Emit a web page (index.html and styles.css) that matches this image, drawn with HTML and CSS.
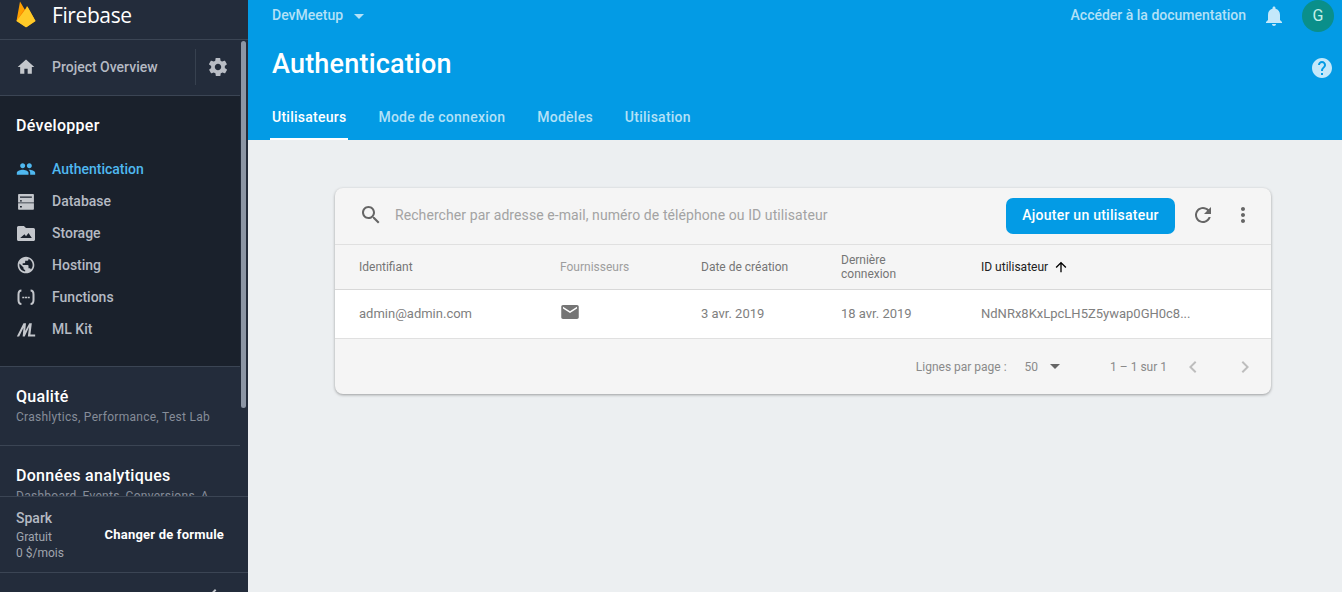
FILE: index.html
```html
<!DOCTYPE html>
<html lang="fr">

<head>
    <meta charset="UTF-8">
    <title>Authentication - Firebase</title>
    <link rel="stylesheet" href="styles.css">
</head>

<body>
    <aside class="sidebar">
        <div class="brand">
            <svg class="brand-logo" viewBox="0 0 20 27" width="20" height="27">
                <path fill="#ffa000" d="M.5 20 4 .5l5 8.500 2-4 8.500 15-9 6z"/>
                <path fill="#f57c00" d="M.5 20 8 8.500l3.500 6z"/>
                <path fill="#ffca28" d="M.5 20 11.500 5.500 19.500 20l-8.700 6c-.5.300-1 .3-1.500 0z"/>
            </svg>
            <span class="brand-name">Firebase</span>
        </div>

        <div class="sidebar-scroll">
            <div class="overview">
                <svg class="nav-icon" viewBox="0 0 24 24"><path d="M10 20v-6h4v6h5v-8h3L12 3 2 12h3v8z"/></svg>
                <span class="overview-label">Project Overview</span>
                <span class="overview-gear">
                    <svg viewBox="0 0 24 24" width="22" height="22"><path d="M19.400 13c.04-.3.100-.7.100-1s-.03-.7-.1-1l2.100-1.600c.2-.2.2-.4.100-.6l-2-3.500c-.1-.2-.4-.3-.6-.2l-2.500 1c-.5-.4-1.100-.7-1.700-1l-.4-2.600c0-.3-.2-.4-.5-.4h-4c-.3 0-.5.200-.5.400l-.4 2.600c-.6.300-1.200.6-1.700 1l-2.500-1c-.2-.1-.5 0-.6.200l-2 3.500c-.1.200-.1.500.1.600L4.600 11c0 .3-.1.700-.1 1s0 .7.100 1l-2.100 1.600c-.2.200-.2.400-.1.600l2 3.500c.1.200.4.300.6.200l2.500-1c.5.400 1.100.7 1.700 1l.4 2.600c0 .3.200.4.500.4h4c.3 0 .5-.2.500-.4l.4-2.600c.6-.3 1.200-.6 1.700-1l2.500 1c.2.100.5 0 .6-.2l2-3.500c.1-.2.100-.5-.1-.6zM12 15.500c-1.900 0-3.500-1.600-3.500-3.500s1.600-3.500 3.500-3.500 3.500 1.600 3.500 3.500-1.600 3.500-3.500 3.500z"/></svg>
                </span>
            </div>

            <nav class="nav-develop">
                <h2 class="nav-title">Développer</h2>
                <a class="nav-item is-active">
                    <svg class="nav-icon" viewBox="0 0 24 24"><path d="M16 11c1.700 0 3-1.300 3-3s-1.300-3-3-3-3 1.300-3 3 1.300 3 3 3zm-8 0c1.700 0 3-1.300 3-3S9.700 5 8 5 5 6.300 5 8s1.300 3 3 3zm0 2c-2.300 0-7 1.200-7 3.500V19h14v-2.500C15 14.200 10.300 13 8 13zm8 0h-1c1.200.8 2 2 2 3.500V19h6v-2.500c0-2.300-4.700-3.500-7-3.500z"/></svg>
                    Authentication
                </a>
                <a class="nav-item">
                    <svg class="nav-icon" viewBox="0 0 24 24"><path fill-rule="evenodd" d="M3.500 3.600h17c.6 0 1 .4 1 1v9.200H2.500V4.600c0-.6.400-1 1-1zM4.800 6.500V8H19V6.500zm0 4.500v1.500H7V11zM2.500 14.800h19v6.700c0 .6-.4 1-1 1h-17c-.6 0-1-.4-1-1zM4.800 18v1.800H7V18z"/></svg>
                    Database
                </a>
                <a class="nav-item">
                    <svg class="nav-icon" viewBox="0 0 24 24"><path fill-rule="evenodd" d="M1.200 5.500c0-1 .8-1.900 1.800-1.900h6.500l2.500 2.500h9c1 0 1.800.9 1.800 1.900v11.700c0 1-.8 1.900-1.800 1.900H3c-1 0-1.800-.9-1.800-1.900zM5 18h14l-4-6-3 3.800-1.800-2.300z"/></svg>
                    Storage
                </a>
                <a class="nav-item">
                    <svg class="nav-icon" viewBox="0 0 24 24"><path d="M12 2C6.500 2 2 6.500 2 12s4.500 10 10 10 10-4.500 10-10S17.500 2 12 2zm-1 17.900c-3.900-.5-7-3.900-7-7.900 0-.6.100-1.200.2-1.800L9 15v1c0 1.100.9 2 2 2zm6.900-2.500c-.3-.8-1-1.400-1.900-1.400h-1v-3c0-.6-.4-1-1-1H8v-2h2c.6 0 1-.4 1-1V7h2c1.100 0 2-.9 2-2v-.4c2.900 1.200 5 4.100 5 7.400 0 2.100-.8 4-2.100 5.400z"/></svg>
                    Hosting
                </a>
                <a class="nav-item">
                    <svg class="nav-icon nav-icon-line" viewBox="0 0 24 24">
                        <path d="M6.500 4.200C3.500 4.200 3 6.500 3 9v6.500c0 2.500.5 4.800 3.500 4.800"/>
                        <path d="M17.500 4.200c3 0 3.500 2.300 3.500 4.800v6.500c0 2.500-.5 4.800-3.500 4.800"/>
                        <path class="dash" d="M7.500 12.500h9"/>
                    </svg>
                    Functions
                </a>
                <a class="nav-item">
                    <svg class="nav-icon" viewBox="0 0 24 24"><path d="M1 21 9 5h3l-1 9.500L16 5h3l-1.700 13.500H23V21h-8.800l1.500-11.500L10.500 21H8l1-10.500L3.800 21z"/></svg>
                    ML Kit
                </a>
            </nav>

            <section class="nav-group">
                <h2 class="nav-title">Qualité</h2>
                <p class="nav-sub">Crashlytics, Performance, Test Lab</p>
            </section>

            <section class="nav-group nav-group-last">
                <h2 class="nav-title">Données analytiques</h2>
                <p class="nav-sub">Dashboard, Events, Conversions, A</p>
            </section>
        </div>

        <div class="plan">
            <div class="plan-info">
                <strong class="plan-name">Spark</strong>
                <span>Gratuit</span>
                <span>0 $/mois</span>
            </div>
            <a class="plan-change">Changer de formule</a>
        </div>
        <div class="collapse">
            <svg viewBox="0 0 24 24" width="24" height="24"><path d="M15.400 7.400 14 6l-6 6 6 6 1.400-1.400L10.800 12z"/></svg>
        </div>

        <div class="scroll-thumb"></div>
    </aside>

    <main class="content">
        <header class="topbar">
            <div class="topbar-row">
                <span class="project">DevMeetup</span>
                <span class="caret caret-light"></span>
                <a class="docs-link">Accéder à la documentation</a>
                <svg class="bell" viewBox="0 0 24 24" width="24" height="24"><path d="M12 22c1.100 0 2-.9 2-2h-4c0 1.100.9 2 2 2zm6-6v-5c0-3.100-1.600-5.600-4.500-6.300V4c0-.8-.7-1.500-1.500-1.500s-1.500.7-1.500 1.500v.7C7.600 5.400 6 7.900 6 11v5l-2 2v1h16v-1z"/></svg>
                <span class="avatar">G</span>
            </div>
            <div class="title-row">
                <h1>Authentication</h1>
                <svg class="help" viewBox="0 0 24 24" width="24" height="24"><path d="M12 2C6.500 2 2 6.500 2 12s4.500 10 10 10 10-4.500 10-10S17.500 2 12 2zm1 17h-2v-2h2zm2.100-7.700-.9.900c-.7.700-1.200 1.300-1.200 2.800h-2v-.5c0-1.100.4-2.100 1.200-2.800l1.200-1.300c.4-.3.600-.8.600-1.400 0-1.100-.9-2-2-2s-2 .9-2 2H8c0-2.200 1.800-4 4-4s4 1.800 4 4c0 .9-.4 1.700-.9 2.300z"/></svg>
            </div>
            <div class="tabs">
                <a class="tab is-active">Utilisateurs</a>
                <a class="tab">Mode de connexion</a>
                <a class="tab">Modèles</a>
                <a class="tab">Utilisation</a>
            </div>
        </header>

        <div class="page">
            <div class="card">
                <div class="toolbar">
                    <svg class="search-icon" viewBox="0 0 24 24" width="24" height="24"><path d="M15.500 14h-.8l-.3-.3c1-1.100 1.600-2.600 1.600-4.200C16 5.900 13.100 3 9.500 3S3 5.900 3 9.500 5.900 16 9.500 16c1.600 0 3.100-.6 4.200-1.600l.3.3v.8l5 5 1.500-1.500zm-6 0C7 14 5 12 5 9.500S7 5 9.500 5 14 7 14 9.500 12 14 9.500 14z"/></svg>
                    <span class="search-text">Rechercher par adresse e-mail, numéro de téléphone ou ID utilisateur</span>
                    <button class="add-btn">Ajouter un utilisateur</button>
                    <svg class="tool-icon" viewBox="0 0 24 24" width="24" height="24"><path d="M17.650 6.350C16.200 4.900 14.200 4 12 4c-4.400 0-8 3.600-8 8s3.600 8 8 8c3.700 0 6.800-2.500 7.700-6h-2.100c-.8 2.300-3 4-5.600 4-3.300 0-6-2.700-6-6s2.700-6 6-6c1.700 0 3.100.7 4.200 1.800L13 11h7V4z"/></svg>
                    <svg class="tool-icon" viewBox="0 0 24 24" width="24" height="24"><path d="M12 8c1.100 0 2-.9 2-2s-.9-2-2-2-2 .9-2 2 .9 2 2 2zm0 2c-1.100 0-2 .9-2 2s.9 2 2 2 2-.9 2-2-.9-2-2-2zm0 6c-1.100 0-2 .9-2 2s.9 2 2 2 2-.9 2-2-.9-2-2-2z"/></svg>
                </div>

                <div class="table-row table-head">
                    <span class="col-id">Identifiant</span>
                    <span class="col-prov is-muted">Fournisseurs</span>
                    <span class="col-date">Date de création</span>
                    <span class="col-last">Dernière<br>connexion</span>
                    <span class="col-uid is-sorted">ID utilisateur
                        <svg viewBox="0 0 24 24" width="16" height="16"><path d="M4 12l1.400 1.400L11 7.800V20h2V7.800l5.600 5.600L20 12l-8-8z"/></svg>
                    </span>
                </div>

                <div class="table-row table-body">
                    <span class="col-id">admin@admin.com</span>
                    <span class="col-prov">
                        <svg class="mail" viewBox="0 0 20 16" width="18" height="14"><path d="M18 0H2C.9 0 0 .9 0 2v12c0 1.100.9 2 2 2h16c1.100 0 2-.9 2-2V2c0-1.100-.9-2-2-2zm0 4-8 5-8-5V2l8 5 8-5z"/></svg>
                    </span>
                    <span class="col-date">3 avr. 2019</span>
                    <span class="col-last">18 avr. 2019</span>
                    <span class="col-uid">NdNRx8KxLpcLH5Z5ywap0GH0c8...</span>
                </div>

                <div class="pager">
                    <span>Lignes par page :</span>
                    <span class="pager-size">50</span>
                    <span class="caret caret-dark"></span>
                    <span class="pager-range">1 – 1 sur 1</span>
                    <svg class="pager-arrow" viewBox="0 0 24 24" width="24" height="24"><path d="M15.400 7.400 14 6l-6 6 6 6 1.400-1.400L10.800 12z"/></svg>
                    <svg class="pager-arrow" viewBox="0 0 24 24" width="24" height="24"><path d="M10 6 8.600 7.400 13.200 12l-4.600 4.600L10 18l6-6z"/></svg>
                </div>
            </div>
        </div>
    </main>
</body>

</html>
```

FILE: styles.css
```css
* {
    box-sizing: border-box;
}

body {
    display: flex;
    height: 592px;
    margin: 0;
    overflow: hidden;
    font-family: Roboto, sans-serif;
    background-color: #eceff1;
}

h1,
h2,
p {
    margin: 0;
    font-weight: 500;
}

/* sidebar */
.sidebar {
    position: relative;
    display: flex;
    flex: none;
    flex-direction: column;
    width: 248px;
    height: 592px;
    overflow: hidden;
    color: #fff;
    background-color: #232c3b;
}

.brand {
    display: flex;
    flex: none;
    align-items: center;
    height: 40px;
    padding: 0 0 11px 16px;
    border-bottom: 1px solid #3b4554;
}

.brand-logo {
    margin-top: 1px;
}

.brand-name {
    margin-top: 2px;
    margin-left: 16px;
    font-family: "Open Sans", Roboto, sans-serif;
    font-size: 21px;
    letter-spacing: -.4px;
}

.sidebar-scroll {
    flex: 1;
    min-height: 0;
    width: 240px;
    overflow: hidden;
}

.overview {
    display: flex;
    align-items: center;
    height: 56px;
    padding-left: 16px;
    padding-bottom: 1px;
    font-size: 14px;
    font-weight: 500;
    color: #b5bac3;
    border-bottom: 1px solid #3b4554;
}

.overview-label {
    width: 143px;
    margin-left: 16px;
}

.overview-gear {
    display: flex;
    align-items: center;
    height: 36px;
    padding-left: 11px;
    border-left: 1px solid #37414f;
}

.overview-gear svg {
    fill: #b9bdc5;
}

.nav-icon {
    flex: none;
    width: 20px;
    height: 20px;
    fill: #c4c7cc;
}

.nav-icon-line {
    fill: none;
    stroke: #c4c7cc;
    stroke-width: 2.4;
}

.nav-icon-line .dash {
    stroke-width: 1.8;
    stroke-dasharray: 2.500 .8;
}

.nav-develop {
    display: flex;
    flex-direction: column;
    height: 271px;
    padding-top: 20px;
    background-color: #1a212c;
    border-bottom: 1px solid #3b4554;
}

.nav-title {
    padding-left: 16px;
    font-size: 16px;
    line-height: 20px;
    letter-spacing: .3px;
    color: #fff;
}

.nav-develop .nav-title {
    margin-bottom: 17px;
}

.nav-item {
    display: flex;
    align-items: center;
    gap: 16px;
    height: 32px;
    padding-left: 16px;
    font-size: 14px;
    font-weight: 500;
    color: #b5bac3;
}

.nav-item.is-active {
    color: #4fb8f0;
}

.nav-item.is-active .nav-icon {
    fill: #4fb8f0;
}

.nav-group {
    height: 79px;
    padding-top: 20px;
    border-bottom: 1px solid #3b4554;
}

.nav-group-last {
    border-bottom: none;
}

.nav-sub {
    padding-left: 16px;
    font-size: 12px;
    font-weight: 400;
    line-height: 20px;
    letter-spacing: .28px;
    color: #868d99;
    white-space: nowrap;
}

.plan {
    display: flex;
    flex: none;
    align-items: center;
    justify-content: space-between;
    height: 77px;
    padding: 0 24px 0 16px;
    background-color: #232c3b;
    border-top: 1px solid #3b4554;
    border-bottom: 1px solid #3b4554;
}

.plan-info {
    display: flex;
    flex-direction: column;
    padding-top: 1px;
    font-size: 12px;
    line-height: 16px;
    color: #a0a5ae;
}

.plan-name {
    margin-bottom: 2px;
    font-size: 14px;
    font-weight: 500;
    line-height: 18px;
    color: #b5bac3;
}

.plan-change {
    font-size: 13px;
    font-weight: 700;
    letter-spacing: .2px;
}

.collapse {
    display: flex;
    flex: none;
    justify-content: flex-end;
    height: 19px;
    padding-right: 23px;
    padding-top: 10px;
    overflow: hidden;
    fill: #c4c7cc;
}

.scroll-thumb {
    position: absolute;
    top: 41px;
    left: 241px;
    width: 5px;
    height: 367px;
    background-color: #8c96a5;
    border-radius: 3px;
}

/* main column */
.content {
    display: flex;
    flex: 1;
    flex-direction: column;
    min-width: 0;
}

.topbar {
    flex: none;
    height: 140px;
    color: #fff;
    background-color: #039be5;
}

.topbar-row {
    display: flex;
    align-items: center;
    height: 30px;
    margin-bottom: 2px;
    padding: 0 8px 0 24px;
    font-size: 14px;
    font-weight: 500;
    color: #b3e1f7;
}

.project {
    margin-right: 11px;
}

.caret {
    width: 0;
    height: 0;
    border-top: 5px solid;
    border-right: 5px solid transparent;
    border-left: 5px solid transparent;
}

.caret-light {
    margin-top: 2px;
    color: #b3e1f7;
}

.docs-link {
    margin-left: auto;
    margin-right: 16px;
}

.bell {
    margin-top: 1px;
    fill: #c4e8fa;
}

.avatar {
    align-self: flex-start;
    width: 32px;
    height: 32px;
    margin-left: 16px;
    font-size: 16px;
    font-weight: 400;
    line-height: 32px;
    color: #c4f0e8;
    text-align: center;
    background-color: #0a8f8a;
    border-radius: 50%;
}

.title-row {
    display: flex;
    align-items: center;
    justify-content: space-between;
    height: 64px;
    padding: 0 8px 0 24px;
}

.title-row h1 {
    font-size: 27px;
    font-weight: 500;
    line-height: 64px;
    letter-spacing: .2px;
}

.help {
    margin-top: 8px;
    fill: #c4e8fa;
}

.tabs {
    display: flex;
    gap: 32px;
    height: 44px;
    padding-left: 24px;
}

.tab {
    position: relative;
    font-size: 14px;
    font-weight: 500;
    line-height: 42px;
    letter-spacing: .25px;
    color: #b3e1f7;
}

.tab.is-active {
    color: #fff;
}

/* active tab underline */
.tab.is-active:after {
    position: absolute;
    right: -2px;
    bottom: 0;
    left: -2px;
    display: block;
    height: 2px;
    content: "";
    background-color: #fff;
}

.page {
    flex: 1;
    padding: 48px 71px 0 87px;
}

.card {
    overflow: hidden;
    background-color: #f5f5f5;
    border-radius: 8px;
    box-shadow: 0 1px 3px rgba(0, 0, 0, .35);
}

.toolbar {
    display: flex;
    align-items: center;
    height: 57px;
    padding: 0 16px 0 24px;
    border-bottom: 1px solid #e0e0e0;
}

.search-icon {
    flex: none;
    margin-bottom: 2px;
    fill: #666;
}

.search-text {
    flex: 1;
    margin-bottom: 2px;
    margin-left: 12px;
    font-size: 14px;
    letter-spacing: .08px;
    color: #a3a3a3;
}

.add-btn {
    height: 36px;
    width: 169px;
    padding: 0 0 2px;
    font-family: inherit;
    font-size: 14px;
    font-weight: 500;
    letter-spacing: .25px;
    color: #fff;
    background-color: #039be5;
    border: none;
    border-radius: 7px;
}

.tool-icon {
    flex: none;
    margin-bottom: 2px;
    margin-left: 16px;
    fill: #666;
}

.table-row {
    display: flex;
    align-items: center;
    font-size: 12px;
    color: #757575;
}

.table-head {
    height: 45px;
    border-bottom: 1px solid #d8d8d8;
    line-height: 14px;
}

.table-body {
    height: 49px;
    padding-bottom: 2px;
    font-size: 13px;
    color: #808080;
    background-color: #fff;
    border-bottom: 1px solid #e0e0e0;
}

.col-id {
    width: 225px;
    padding-left: 24px;
}

.col-prov {
    width: 141px;
}

.col-date {
    width: 140px;
}

.col-last {
    width: 140px;
}

.col-uid {
    flex: 1;
}

.is-muted {
    color: #9e9e9e;
}

.is-sorted {
    display: flex;
    align-items: center;
    gap: 5px;
    color: #212121;
}

.mail {
    display: block;
    margin-top: -2px;
    margin-left: 1px;
    fill: #757575;
}

.pager {
    display: flex;
    align-items: center;
    justify-content: flex-end;
    height: 55px;
    padding-right: 14px;
    font-size: 12px;
    color: #8a8a8a;
}

.pager-size {
    margin-left: 18px;
    margin-right: 12px;
}

.caret-dark {
    margin-right: 50px;
    color: #666;
}

.pager-range {
    margin-right: 14px;
}

.pager-arrow {
    fill: #bdbdbd;
}

.pager-arrow:last-child {
    margin-left: 28px;
}
```
